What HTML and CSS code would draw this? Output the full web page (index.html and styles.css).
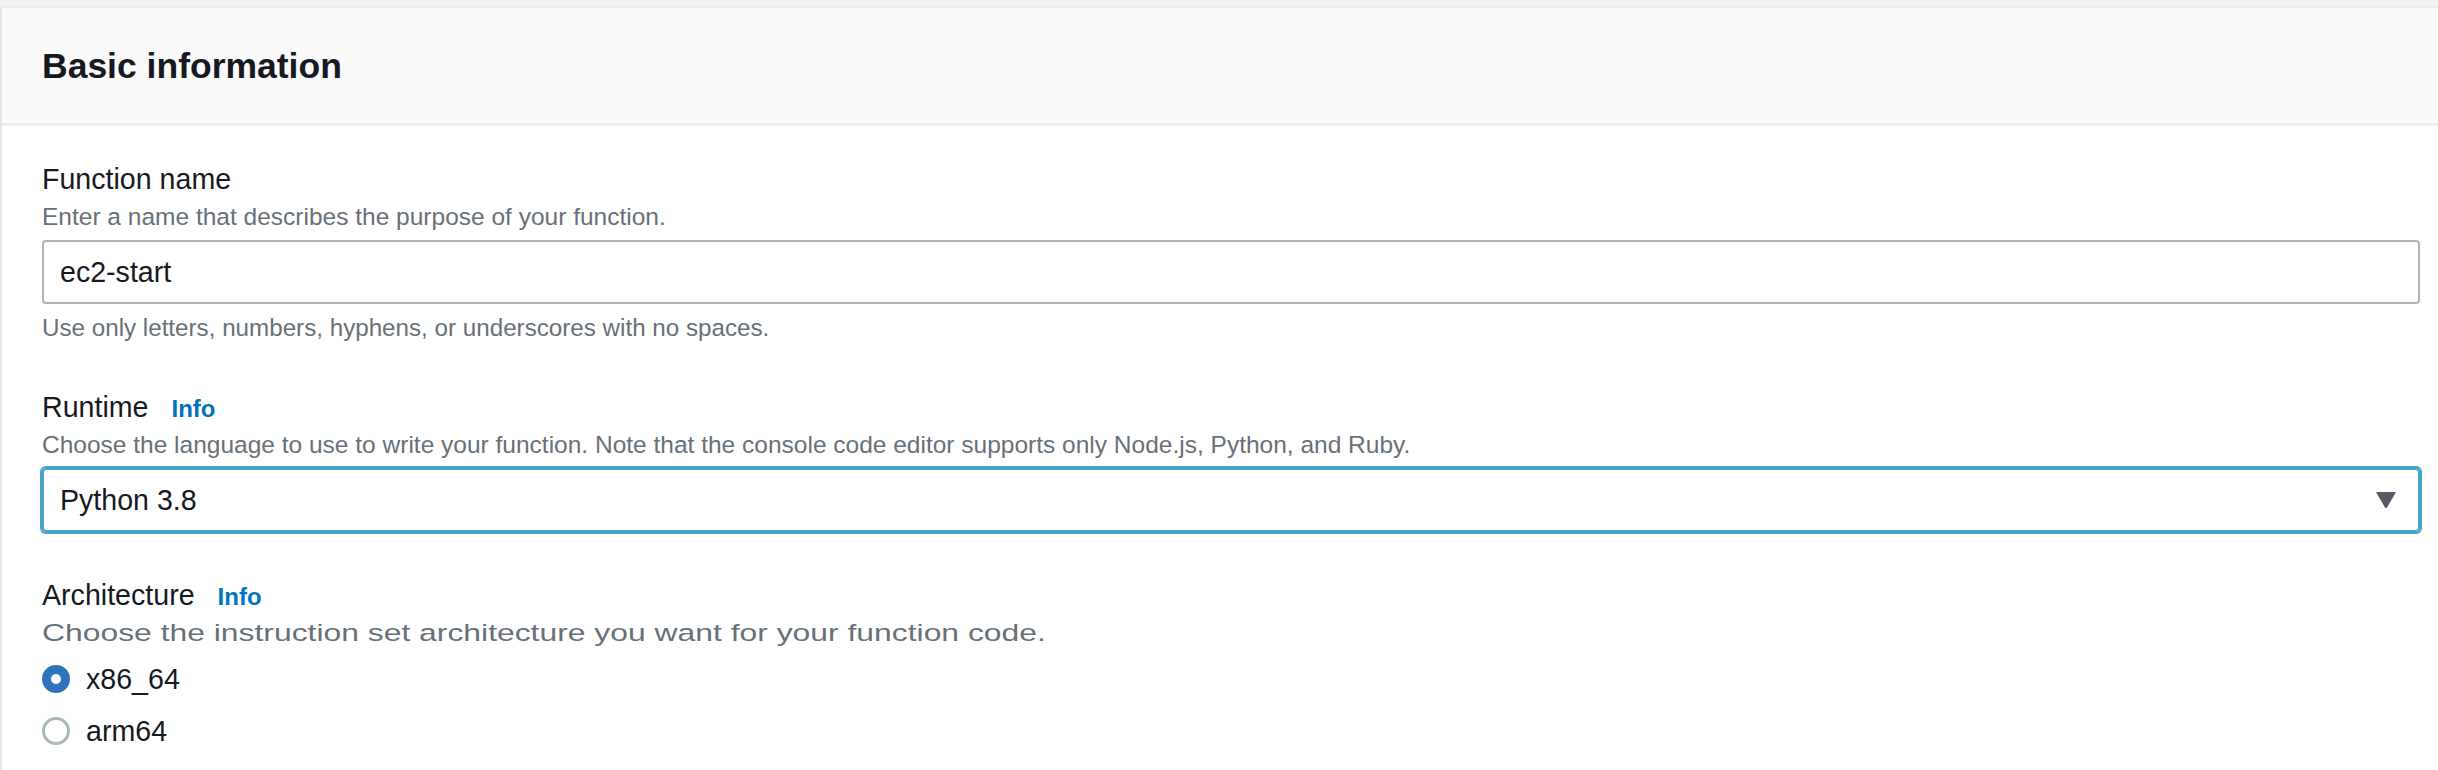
FILE: index.html
```html
<!DOCTYPE html>
<html lang="en">
<head>
<meta charset="utf-8">
<title>Basic information</title>
<link rel="stylesheet" href="styles.css">
</head>
<body>
<div class="panel">
  <div class="panel-header">
    <h2 class="panel-title">Basic information</h2>
  </div>
  <div class="panel-body">
    <div class="field">
      <div class="label-row"><span class="label">Function name</span></div>
      <div class="desc">Enter a name that describes the purpose of your function.</div>
      <div class="input">ec2-start</div>
      <div class="constraint">Use only letters, numbers, hyphens, or underscores with no spaces.</div>
    </div>
    <div class="field">
      <div class="label-row"><span class="label">Runtime</span><a class="info">Info</a></div>
      <div class="desc">Choose the language to use to write your function. Note that the console code editor supports only Node.js, Python, and Ruby.</div>
      <div class="select">
        <span class="select-value">Python 3.8</span>
        <svg class="caret" width="20" height="16" viewBox="0 0 20 16"><path d="M0 0 H20 L11.2 15.2 Q10 16.6 8.8 15.2 Z" fill="#545b64"/></svg>
      </div>
    </div>
    <div class="field">
      <div class="label-row"><span class="label">Architecture</span><a class="info">Info</a></div>
      <div class="desc"><span class="desc-wide">Choose the instruction set architecture you want for your function code.</span></div>
      <div class="radios">
        <div class="radio-row"><span class="radio checked"></span><span class="radio-label">x86_64</span></div>
        <div class="radio-row"><span class="radio"></span><span class="radio-label">arm64</span></div>
      </div>
    </div>
  </div>
</div>
</body>
</html>
```
FILE: styles.css
```css
html, body {
  margin: 0;
  padding: 0;
}
body {
  background: #f2f3f3;
  padding-top: 6px;
  font-family: "Liberation Sans", Arial, sans-serif;
  color: #16191f;
  overflow: hidden;
}
.panel {
  background: #ffffff;
  border-top: 2px solid #eaeded;
  border-left: 2px solid #e3e6e6;
}
.panel-header {
  background: #fafafa;
  padding: 36px 40px 35px;
  border-bottom: 3px solid #eaeded;
}
.panel-title {
  margin: 0;
  font-size: 35.5px;
  line-height: 44px;
  font-weight: 700;
  color: #16191f;
}
.panel-body {
  padding: 31px 18px 20px 40px;
  display: flex;
  flex-direction: column;
  gap: 41px;
}
.field {
  display: flex;
  flex-direction: column;
}
.label-row {
  display: flex;
  align-items: baseline;
  height: 44px;
  line-height: 44px;
}
.label {
  font-size: 28.6px;
  color: #16191f;
}
.info {
  margin-left: 23px;
  font-size: 24px;
  font-weight: 700;
  color: #0073bb;
}
.desc {
  height: 32px;
  font-size: 24.5px;
  line-height: 32px;
  color: #687078;
  white-space: nowrap;
}
.desc-wide {
  display: inline-block;
  vertical-align: top;
  line-height: 32px;
  transform: scaleX(1.3);
  transform-origin: left center;
}
.input {
  margin-top: 7px;
  height: 64px;
  box-sizing: border-box;
  border: 2px solid #aab7b8;
  border-radius: 4px;
  padding: 0 16px;
  display: flex;
  align-items: center;
  font-size: 28.6px;
  color: #16191f;
}
.constraint {
  margin-top: 8px;
  font-size: 24.2px;
  line-height: 32px;
  color: #687078;
}
.select {
  margin-top: 7px;
  height: 64px;
  box-sizing: border-box;
  border: 2px solid #44a2c9;
  box-shadow: 0 0 0 2px #44a2c9;
  border-radius: 4px;
  padding: 0 22px 0 16px;
  display: flex;
  align-items: center;
  justify-content: space-between;
  font-size: 28.6px;
  color: #16191f;
}
.caret {
  display: block;
}
.radios {
  margin-top: 8px;
  display: flex;
  flex-direction: column;
  gap: 8px;
}
.radio-row {
  display: flex;
  align-items: center;
  height: 44px;
}
.radio {
  width: 28px;
  height: 28px;
  box-sizing: border-box;
  border-radius: 50%;
  border: 3px solid #aab7b8;
  background: #ffffff;
}
.radio.checked {
  border: 9px solid #2f74bd;
}
.radio-label {
  margin-left: 16px;
  font-size: 28.6px;
  color: #16191f;
}
```
